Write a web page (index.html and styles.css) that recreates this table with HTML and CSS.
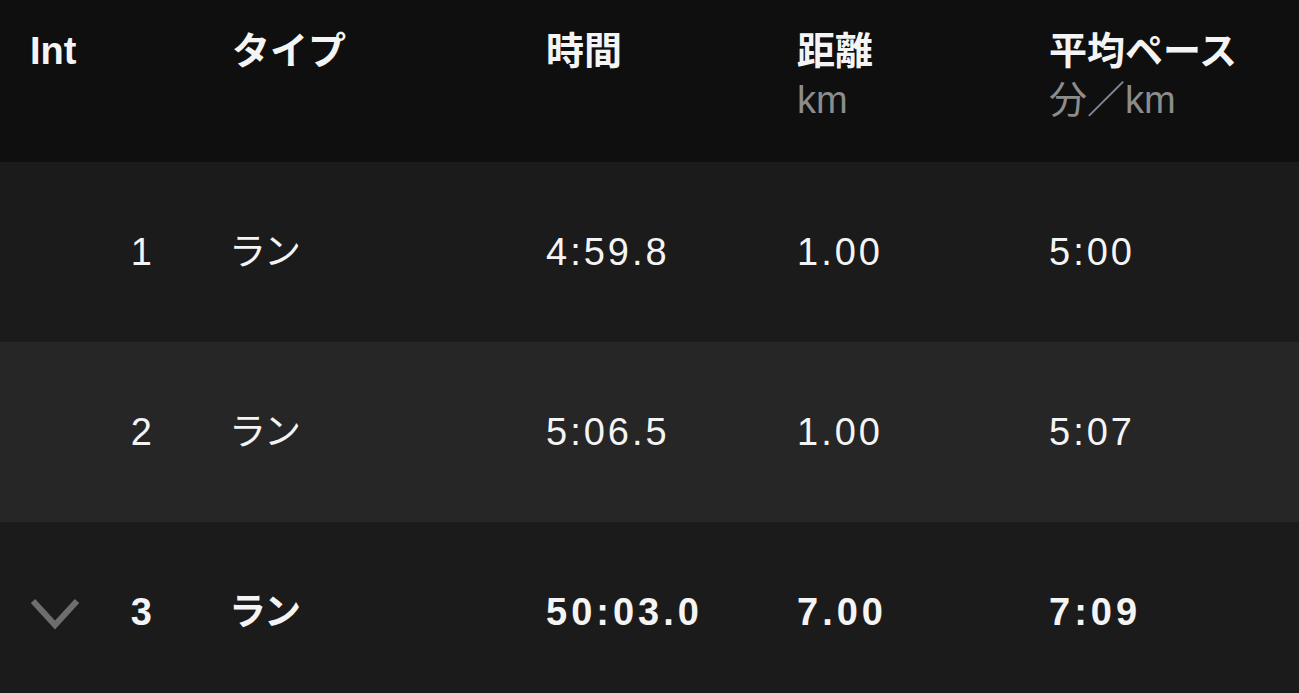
FILE: index.html
```html
<!DOCTYPE html>
<html lang="ja">
<head>
<meta charset="utf-8">
<link rel="stylesheet" href="styles.css">
</head>
<body>
<div class="table">
  <div class="row head">
    <div class="cell"><div class="title">Int</div></div>
    <div class="cell"><div class="title">タイプ</div></div>
    <div class="cell"><div class="title">時間</div></div>
    <div class="cell"><div class="title">距離</div><div class="sub">km</div></div>
    <div class="cell"><div class="title">平均ペース</div><div class="sub">分／km</div></div>
  </div>
  <div class="row data odd">
    <div class="cell c-int"><span class="chev"></span><span class="num">1</span></div>
    <div class="cell jp">ラン</div>
    <div class="cell">4:59.8</div>
    <div class="cell">1.00</div>
    <div class="cell">5:00</div>
  </div>
  <div class="row data even">
    <div class="cell c-int"><span class="chev"></span><span class="num">2</span></div>
    <div class="cell jp">ラン</div>
    <div class="cell">5:06.5</div>
    <div class="cell">1.00</div>
    <div class="cell">5:07</div>
  </div>
  <div class="row data odd bold">
    <div class="cell c-int">
      <span class="chev"><svg width="50" height="32" viewBox="0 0 50 32"><polyline points="3,3 25,27 47,3" fill="none" stroke="#6e6e6e" stroke-width="6"/></svg></span>
      <span class="num">3</span>
    </div>
    <div class="cell jp">ラン</div>
    <div class="cell">50:03.0</div>
    <div class="cell">7.00</div>
    <div class="cell">7:09</div>
  </div>
</div>
</body>
</html>
```
FILE: styles.css
```css
html, body {
  margin: 0;
  padding: 0;
  background: #1b1b1b;
  overflow: hidden;
}
.table {
  font-family: "Liberation Sans", "Noto Sans CJK JP", sans-serif;
  font-size: 38px;
  line-height: 49px;
  color: #f4f4f4;
}
.row {
  display: grid;
  grid-template-columns: 202px 314px 251px 252px 1fr;
  padding-left: 30px;
}
.head {
  background: #0f0f0f;
  height: 162px;
  box-sizing: border-box;
  padding-top: 27px;
  font-weight: 700;
  align-items: start;
}
.sub {
  color: #8c8c8c;
  font-weight: 400;
}
.data {
  height: 180px;
  align-items: center;
  letter-spacing: 3px;
}
.data.bold { letter-spacing: 4px; }
.data .jp {
  letter-spacing: -2px;
  margin-left: -3px;
  font-size: 37px;
}
.odd { background: #1b1b1b; }
.even { background: #262626; }
.bold { font-weight: 700; }
.c-int {
  display: flex;
  align-items: center;
}
.chev {
  width: 50px;
  height: 32px;
  display: flex;
  margin-top: 4px;
}
.num {
  width: 72px;
  text-align: right;
  letter-spacing: 0;
}
```
